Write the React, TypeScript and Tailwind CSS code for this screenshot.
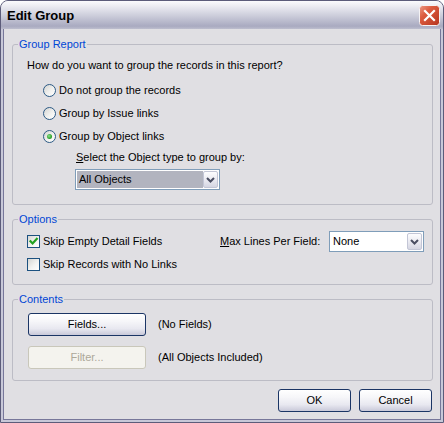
import React from 'react';

const Radio: React.FC<{ checked?: boolean; label: string }> = ({ checked, label }) => (
  <div className="flex items-center h-[13px]">
    <span className="w-[13px] h-[13px] rounded-full border border-[#2c5a85] bg-[linear-gradient(135deg,#d4d4d2_0%,#f1f1ef_55%,#ffffff_100%)] flex items-center justify-center shrink-0">
      {checked && (
        <span className="w-[5px] h-[5px] rounded-full bg-[radial-gradient(circle_at_40%_40%,#8ee08e_0%,#2ea42e_60%,#1b8a1b_100%)]" />
      )}
    </span>
    <span className="ml-[3px] leading-[13px]">{label}</span>
  </div>
);

const Check: React.FC<{ checked?: boolean; label: string }> = ({ checked, label }) => (
  <div className="flex items-center h-[13px]">
    <span className="w-[13px] h-[13px] border border-[#1c5180] bg-[linear-gradient(135deg,#d6d6d3_0%,#f3f3f1_55%,#ffffff_100%)] flex items-center justify-center shrink-0">
      {checked && (
        <svg width="11" height="11" viewBox="0 0 11 11">
          <path d="M2.5 5.2 L4.6 7.4 L8.8 2.8" fill="none" stroke="#21a121" strokeWidth="2.2" strokeLinecap="square" />
        </svg>
      )}
    </span>
    <span className="ml-[3px] leading-[13px]">{label}</span>
  </div>
);

const DropArrow: React.FC = () => (
  <span className="w-[15px] h-full rounded-[2px] border border-[#c3c6d6] bg-[linear-gradient(to_bottom,#fdfdfe_0%,#ebebf2_50%,#d5d6e2_100%)] flex items-center justify-center shrink-0">
    <svg width="9" height="6" viewBox="0 0 9 6">
      <path d="M1 1 L4.5 4.5 L8 1" fill="none" stroke="#4a4e62" strokeWidth="2" />
    </svg>
  </span>
);

const Combo: React.FC<{ value: string; width: string; selected?: boolean }> = ({ value, width, selected }) => (
  <div className={`${width} h-[21px] border border-[#7f9db9] bg-white flex p-[1px]`}>
    <span
      className={`flex-1 flex items-center px-[2px] leading-[13px] ${
        selected ? 'bg-[#b2b4bf]' : ''
      }`}
    >
      {value}
    </span>
    <DropArrow />
  </div>
);

const XpButton: React.FC<{ children: React.ReactNode; width: string; disabled?: boolean }> = ({
  children,
  width,
  disabled,
}) =>
  disabled ? (
    <div className={`${width} h-[23px] rounded-[3px] border border-[#c9c7ba] bg-[#f4f3ee] text-[#aca899] flex items-center justify-center`}>
      {children}
    </div>
  ) : (
    <div className={`${width} h-[23px] rounded-[3px] border border-[#1b3565] bg-[linear-gradient(to_bottom,#ffffff_0%,#f6f6f9_35%,#e8e8f0_70%,#c9c9d9_100%)] flex items-center justify-center`}>
      {children}
    </div>
  );

const GroupBox: React.FC<{ title: string; className: string; children: React.ReactNode }> = ({
  title,
  className,
  children,
}) => (
  <div className={`relative border border-[#bcbcc5] rounded-[3px] ${className}`}>
    <span className="absolute -top-[7px] left-[5px] px-[1px] bg-[#e0dfe3] text-[#0046d5] leading-[13px]">
      {title}
    </span>
    {children}
  </div>
);

const App: React.FC = () => {
  return (
    <div className="w-[444px] h-[423px] bg-white font-['Liberation_Sans',Arial,sans-serif] text-[11px] text-black">
      <div className="w-full h-full flex flex-col rounded-t-[8px] border border-[#5c5c7a] bg-[#c8c8d8] overflow-hidden">
        {/* title bar */}
        <div className="h-[28px] shrink-0 flex items-center justify-between pl-[6px] pr-[3px] bg-[linear-gradient(to_bottom,#fbfbfd_0%,#ececf2_18%,#d3d4e0_45%,#b7b8cb_75%,#a9aac0_90%,#bdbece_100%)]">
          <span className="text-[13px] font-bold leading-[16px] pt-[1px]">Edit Group</span>
          <svg width="21" height="21" viewBox="0 0 21 21">
            <defs>
              <linearGradient id="cl" x1="0" y1="0" x2="1" y2="1">
                <stop offset="0" stopColor="#ec9a86" />
                <stop offset="0.35" stopColor="#dc5b3f" />
                <stop offset="1" stopColor="#b5341e" />
              </linearGradient>
            </defs>
            <rect x="0.5" y="0.5" width="20" height="20" rx="3" fill="url(#cl)" stroke="#f4f2f4" />
            <path d="M6 6 L15 15 M15 6 L6 15" stroke="#ffffff" strokeWidth="2.2" strokeLinecap="square" />
          </svg>
        </div>

        {/* client area */}
        <div className="flex-1 mx-[2px] mb-[2px] border-x border-b border-[#77779a] bg-[#e0dfe3] pl-[8px] pr-[7px] pt-[15px] flex flex-col">
          <GroupBox title="Group Report" className="pl-[14px] pt-[14px] pb-[14px]">
            <p className="leading-[13px]">How do you want to group the records in this report?</p>
            <div className="mt-[12px] ml-[16px] flex flex-col gap-[10px]">
              <Radio label="Do not group the records" />
              <Radio label="Group by Issue links" />
              <Radio label="Group by Object links" checked />
            </div>
            <div className="ml-[48px] mt-[8px]">
              <p className="leading-[13px] ml-[1px]">
                <span className="underline">S</span>elect the Object type to group by:
              </p>
              <div className="mt-[5px]">
                <Combo value="All Objects" width="w-[145px]" selected />
              </div>
            </div>
          </GroupBox>

          <GroupBox title="Options" className="mt-[14px] pl-[14px] pt-[11px] pb-[13px]">
            <div className="flex items-center h-[21px]">
              <div className="w-[193px]">
                <Check label="Skip Empty Detail Fields" checked />
              </div>
              <span className="w-[109px] leading-[13px]">
                <span className="underline">M</span>ax Lines Per Field:
              </span>
              <Combo value="None" width="w-[95px]" />
            </div>
            <div className="mt-[6px]">
              <Check label="Skip Records with No Links" />
            </div>
          </GroupBox>

          <GroupBox title="Contents" className="mt-[14px] pl-[15px] pt-[13px] pb-[11px]">
            <div className="flex items-center">
              <XpButton width="w-[118px]">Fields...</XpButton>
              <span className="ml-[12px]">(No Fields)</span>
            </div>
            <div className="flex items-center mt-[10px]">
              <XpButton width="w-[118px]" disabled>
                Filter...
              </XpButton>
              <span className="ml-[12px]">(All Objects Included)</span>
            </div>
          </GroupBox>

          <div className="mt-[8px] flex justify-end gap-[8px] pr-[1px]">
            <XpButton width="w-[73px]">OK</XpButton>
            <XpButton width="w-[73px]">Cancel</XpButton>
          </div>
        </div>
      </div>
    </div>
  );
};

export default App;
